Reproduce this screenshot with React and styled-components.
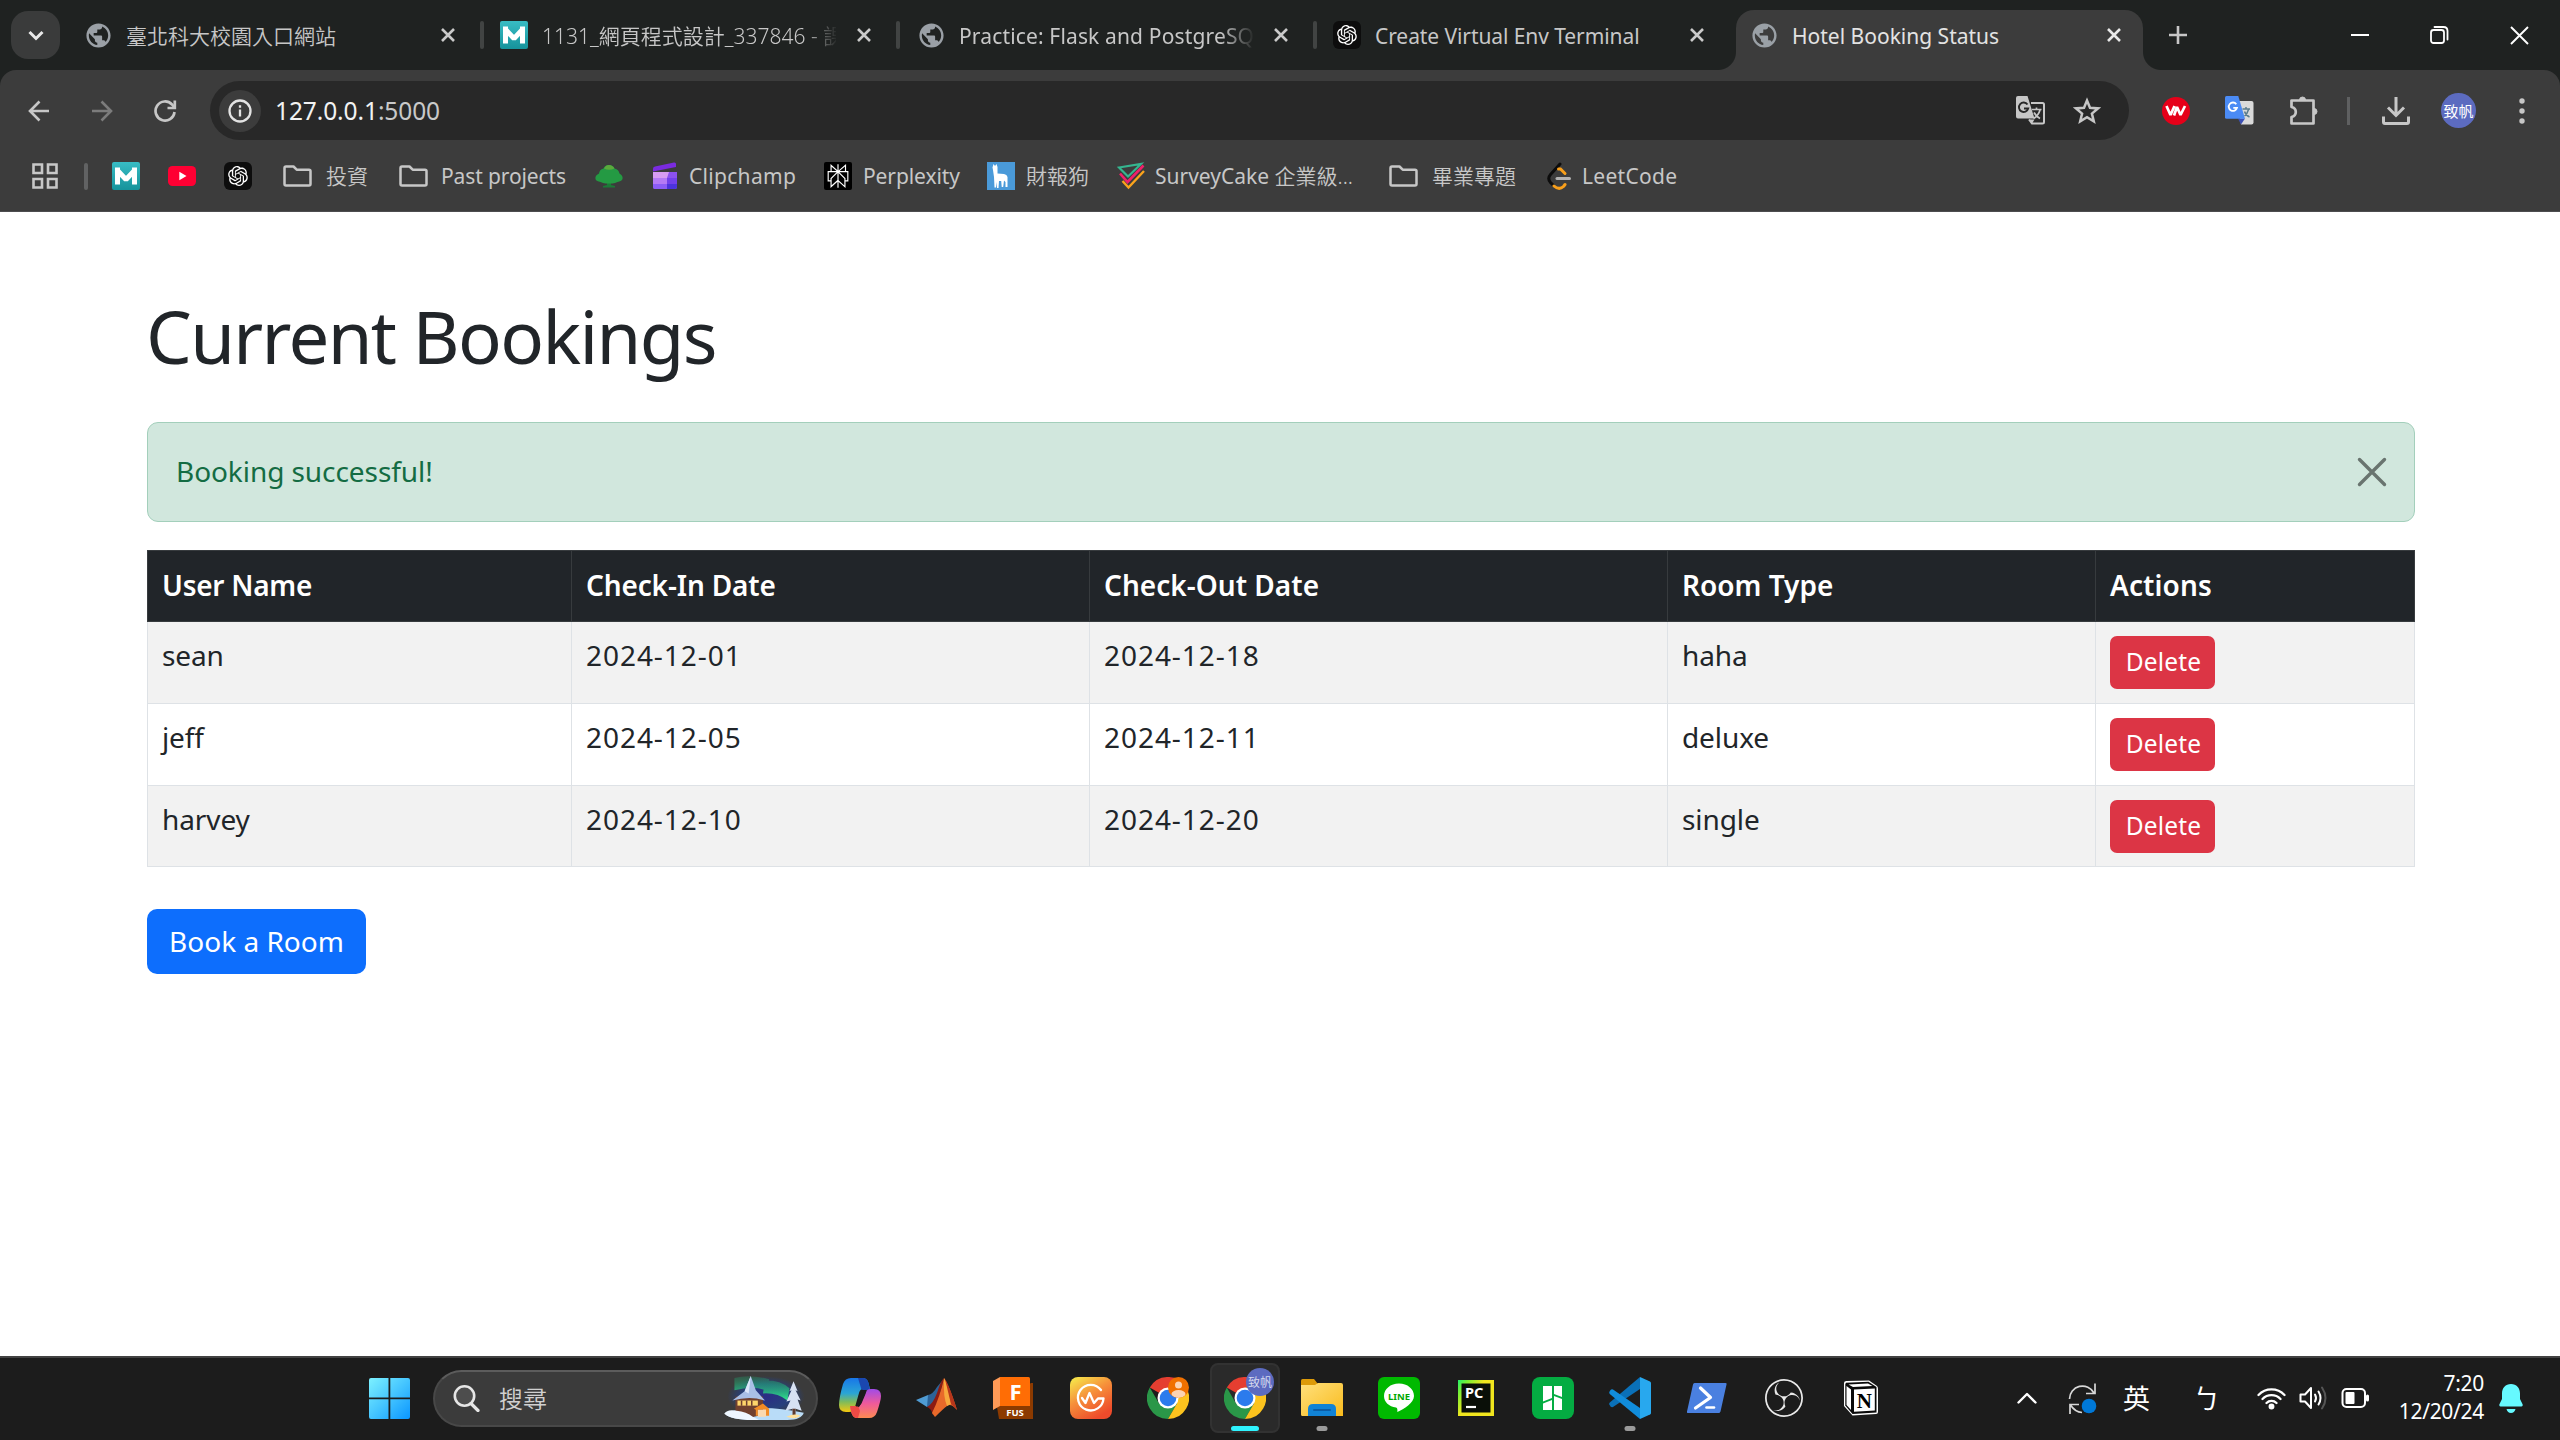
import React from "react";
import styled, { createGlobalStyle, css } from "styled-components";
import { RiOpenaiFill } from "react-icons/ri";
import { SiPerplexity, SiObsstudio } from "react-icons/si";
import { MdPublic } from "react-icons/md";

const GlobalStyle = createGlobalStyle`
  * { box-sizing: border-box; }
  html, body { margin: 0; padding: 0; overflow: hidden; background: #fff; }
  body { font-family: "Noto Sans", "Open Sans", "Noto Sans CJK TC", sans-serif; }
  svg { display: block; flex: none; }
  button { font: inherit; border: 0; padding: 0; }
`;

const uiFont = css`
  font-family: "Noto Sans", "Open Sans", "Noto Sans CJK TC", sans-serif;
`;

const Screen = styled.div`
  width: 2560px;
  height: 1440px;
  display: flex;
  flex-direction: column;
  overflow: hidden;
`;

/* ---------- tab strip ---------- */
const TabStrip = styled.div`
  height: 70px;
  flex: none;
  background: #1f2221;
  display: flex;
  align-items: center;
  padding-left: 11px;
`;
const TabSearch = styled.button`
  width: 49px;
  height: 48px;
  border-radius: 17px;
  background: #3a3b3b;
  display: flex;
  align-items: center;
  justify-content: center;
  margin-right: 8px;
`;
const Tab = styled.div`
  width: ${(p) => p.$width}px;
  height: 70px;
  display: flex;
  align-items: center;
  padding-left: 16px;
`;
const ActiveTab = styled.div`
  position: relative;
  align-self: flex-end;
  width: 407px;
  height: 60px;
  margin-right: 21px;
  padding: 0 0 10px 14px;
  display: flex;
  align-items: center;
  background: #3c3c3c;
  border-radius: 18px 18px 0 0;
  &::before, &::after {
    content: "";
    position: absolute;
    bottom: 0;
    width: 18px;
    height: 18px;
  }
  &::before { left: -18px; background: radial-gradient(circle at 0 0, transparent 17.5px, #3c3c3c 18.5px); }
  &::after { right: -18px; background: radial-gradient(circle at 100% 0, transparent 17.5px, #3c3c3c 18.5px); }
`;
const Favicon = styled.div`
  width: 28px;
  height: 28px;
  flex: none;
  display: flex;
  align-items: center;
  justify-content: center;
`;
const TabTitle = styled.div`
  ${uiFont}
  margin-left: 14px;
  width: 294px;
  flex: none;
  overflow: hidden;
  white-space: nowrap;
  font-size: 21px;
  font-weight: ${(p) => p.$weight || 400};
  line-height: 32px;
  padding-top: 1px;
  color: ${(p) => (p.$active ? "#e3e3e3" : "#c7c7c7")};
  letter-spacing: ${(p) => p.$spacing || 0}px;
  ${(p) => p.$fade && css`mask-image: linear-gradient(90deg, #000 262px, transparent 296px);`}
`;
const TabClose = styled.div`
  width: 14px;
  margin-left: 21px;
  color: ${(p) => (p.$active ? "#e8e8e8" : "#cacaca")};
`;
const TabDivider = styled.div`
  width: 4px;
  height: 28px;
  border-radius: 2px;
  margin-left: 25px;
  background: #414443;
`;
const Spacer = styled.div`flex: 1;`;
const WindowControls = styled.div`
  display: flex;
  align-items: center;
  gap: 61px;
  padding-right: 31px;
  color: #fff;
`;

/* ---------- toolbar ---------- */
const BrowserChrome = styled.div`
  height: 142px;
  flex: none;
  background: #1f2221;
`;
const ChromeBody = styled.div`
  height: 142px;
  background: #3c3c3c;
  border-radius: 16px 16px 0 0;
  border-bottom: 1px solid #4d4d4f;
`;
const Toolbar = styled.div`
  height: 81px;
  padding: 0 30px 0 28px;
  display: flex;
  align-items: center;
  color: #c7c7c7;
`;
const NavIcons = styled.div`
  width: 182px;
  flex: none;
  display: flex;
  gap: 41px;
`;
const Omnibox = styled.div`
  width: 1919px;
  flex: none;
  height: 59px;
  border-radius: 30px;
  background: #282828;
  display: flex;
  align-items: center;
  padding: 0 28px 0 9px;
`;
const SiteInfo = styled.div`
  width: 42px;
  height: 42px;
  border-radius: 50%;
  background: #3c3c3c;
  display: flex;
  align-items: center;
  justify-content: center;
  color: #e3e3e3;
`;
const Url = styled.div`
  margin-left: 14px;
  font-size: 24.5px;
  line-height: 36px;
  color: #c9c9c9;
  letter-spacing: -0.1px;
`;
const UrlHost = styled.span`color: #f2f2f2;`;
const OmniboxIcons = styled.div`
  display: flex;
  align-items: center;
  gap: 28px;
`;
const Extensions = styled.div`
  flex: 1;
  display: flex;
  align-items: center;
  padding-left: 33px;
`;
const VwBadge = styled.div`
  width: 28px;
  height: 28px;
  flex: none;
  border-radius: 50%;
  background: #e60019;
  display: flex;
  align-items: center;
  justify-content: center;
  margin-right: 35px;
`;
const PuzzleSlot = styled.div`
  margin-left: 35px;
`;
const ToolDivider = styled.div`
  width: 3px;
  flex: none;
  height: 28px;
  margin: 0 32px 0 28px;
  background: #5f6061;
`;
const Avatar = styled.div`
  width: 35px;
  height: 35px;
  flex: none;
  border-radius: 50%;
  margin: 0 43px 0 31px;
  background: #5c6bc0;
  color: #fff;
  font: 400 15px/35px "Noto Sans CJK TC", sans-serif;
  text-align: center;
  white-space: nowrap;
`;

/* ---------- bookmarks ---------- */
const BookmarkBar = styled.div`
  height: 60px;
  display: flex;
  align-items: center;
  padding: 0 0 10px 32px;
`;
const AppsDivider = styled.div`
  width: 4px;
  height: 27px;
  border-radius: 2px;
  margin: 0 24px 0 25px;
  background: #616263;
`;
const Bookmark = styled.div`
  width: ${(p) => p.$width}px;
  flex: none;
  display: flex;
  align-items: center;
`;
const BookmarkLabel = styled.div`
  ${uiFont}
  margin-left: ${(p) => p.$gap || 11}px;
  white-space: nowrap;
  font-size: 21px;
  font-weight: ${(p) => p.$weight || 400};
  line-height: 30px;
  color: #c7c7c7;
  letter-spacing: ${(p) => p.$spacing || 0}px;
`;
const ThinHan = styled.span`
  font-weight: 350;
`;
const MoodleTile = styled.div`
  width: 28px;
  height: 28px;
  border-radius: 2px;
  background: linear-gradient(#38bcc4, #16939b);
  display: flex;
  align-items: center;
  justify-content: center;
`;
const DarkTile = styled.div`
  width: 28px;
  height: 28px;
  border-radius: ${(p) => p.$radius}px;
  background: ${(p) => p.$bg || "#0d0d0d"};
  color: #fff;
  display: flex;
  align-items: center;
  justify-content: center;
`;

/* ---------- page ---------- */
const Page = styled.main`
  height: 1144px;
  flex: none;
  background: #fff;
  padding: 82px 145px 0 147px;
  color: #212529;
`;
const Heading = styled.h1`
  margin: 0 0 44px -1px;
  font-size: 72.5px;
  font-weight: 400;
  line-height: 84px;
  letter-spacing: -1.65px;
`;
const Alert = styled.div`
  height: 100px;
  display: flex;
  align-items: center;
  justify-content: space-between;
  padding: 0 27px 0 28px;
  border: 1px solid #a3cfbb;
  border-radius: 11px;
  background: #d1e7dd;
  color: #146c43;
  font-size: 28px;
  line-height: 42px;
  margin-bottom: 28px;
`;
const AlertText = styled.div`
  padding-bottom: 2px;
  letter-spacing: -0.07px;
`;
const BookingTable = styled.table`
  width: 2267px;
  table-layout: fixed;
  border-collapse: collapse;
  font-size: 28px;
  line-height: 42px;
`;
const Col = styled.col`width: ${(p) => p.$width}px;`;
const HeadRow = styled.tr`
  height: 71px;
  background: #212529;
  color: #fff;
`;
const HeadCell = styled.th`
  border: 1px solid #373b3e;
  padding: 0 14px 2px;
  text-align: left;
  font-weight: 600;
  letter-spacing: ${(p) => p.$spacing}px;
`;
const BodyRow = styled.tr`
  height: 82px;
  &:nth-child(odd) { background: #f2f2f2; }
  &:last-child { height: 81px; }
`;
const Cell = styled.td`
  border: 1px solid #dee2e6;
  padding: 12px 14px 0;
  vertical-align: top;
  letter-spacing: ${(p) => (p.$date ? 0.95 : -0.1)}px;
`;
const DeleteButton = styled.button`
  display: block;
  width: 105px;
  height: 53px;
  margin-top: 2px;
  border-radius: 7px;
  background: #dc3545;
  color: #fff;
  font-size: 24.5px;
  line-height: 50px;
  letter-spacing: 0.2px;
  padding: 0 0 2px 2px;
`;
const BookButton = styled.button`
  display: block;
  width: 219px;
  height: 65px;
  margin-top: 42px;
  border-radius: 10px;
  background: #0d6efd;
  color: #fff;
  font-size: 28px;
  line-height: 62px;
  padding-bottom: 2px;
`;

/* ---------- taskbar ---------- */
const Taskbar = styled.footer`
  height: 84px;
  flex: none;
  background: #1c1c1c;
  border-top: 2px solid #424242;
  display: flex;
  align-items: center;
  padding: 0 37px 2px 369px;
`;
const SearchPill = styled.div`
  width: 385px;
  height: 57px;
  margin: 0 7px 0 23px;
  border-radius: 29px;
  border: 2px solid #484848;
  border-top-color: #5c5c5c;
  background: #3b3b3b;
  display: flex;
  align-items: center;
  padding: 0 10px 0 18px;
  color: #d0d0d0;
`;
const SearchText = styled.div`
  margin-left: 19px;
  flex: 1;
  font: 350 24px/36px "Noto Sans CJK TC", sans-serif;
  padding-bottom: 1px;
`;
const AppSlot = styled.div`
  position: relative;
  width: 70px;
  height: 70px;
  margin-right: 7px;
  border-radius: 8px;
  display: flex;
  align-items: center;
  justify-content: center;
  ${(p) => p.$active && css`background: #2a2a2a; border: 2px solid #323232;`}
`;
const RunMark = styled.div`
  position: absolute;
  bottom: ${(p) => (p.$active ? 0 : 2)}px;
  left: 50%;
  transform: translateX(-50%);
  width: ${(p) => (p.$active ? 28 : 11)}px;
  height: 5px;
  border-radius: 3px;
  background: ${(p) => (p.$active ? "#2ff3ff" : "#9a9a9a")};
`;
const ProfileBadge = styled.div`
  position: absolute;
  top: 3px;
  right: 4px;
  width: 28px;
  height: 28px;
  border-radius: 50%;
  background: #5c6bc0;
  color: #d5d9ee;
  font: 400 12px/28px "Noto Sans CJK TC", sans-serif;
  text-align: center;
`;
const GuestBadge = styled.div`
  position: absolute;
  top: 14px;
  right: 14px;
`;
const Tray = styled.div`
  display: flex;
  align-items: center;
  color: #fff;
`;
const TrayGlyph = styled.div`
  width: ${(p) => p.$width}px;
  font: 400 27px/40px "Noto Sans CJK TC", sans-serif;
`;
const TrayItem = styled.div`width: ${(p) => p.$width}px;`;
const Clock = styled.div`
  width: 129px;
  text-align: right;
  font-size: 21px;
  line-height: 28px;
  letter-spacing: -0.3px;
  padding: 0 15px 2px 0;
`;

/* ---------- icons ---------- */
const stroke = { fill: "none", stroke: "currentColor", strokeLinecap: "round", strokeLinejoin: "round" };

const Cross = ({ size = 14, w = 2.6, cap = "butt" }) => (
  <svg width={size} height={size} viewBox={`0 0 ${size} ${size}`} {...stroke} strokeLinecap={cap} strokeWidth={w}>
    <path d={`M1 1 ${size - 1} ${size - 1}M${size - 1} 1 1 ${size - 1}`} />
  </svg>
);
const Moodle = () => (
  <MoodleTile>
    <svg width="28" height="28" viewBox="0 0 28 28" fill="none" stroke="#fff" strokeWidth="5">
      <path d="M5.500 22.500V8.500L14 17.500 22.500 8.500V22.500" strokeLinejoin="bevel" />
      <path d="M5.500 5.500V12M22.500 5.500V12" />
    </svg>
  </MoodleTile>
);
const OpenAiTile = () => <DarkTile $radius={6}><RiOpenaiFill size={24} /></DarkTile>;
const FolderLine = () => (
  <svg width="29" height="22" viewBox="0 0 29 22" {...stroke} stroke="#c7c7c7" strokeWidth="2.500">
    <path d="M1.500 19V3q0-1.500 1.500-1.500h7.500l3.200 3.200H26q1.500 0 1.500 1.500V19q0 1.500-1.500 1.500H3Q1.500 20.500 1.500 19Z" />
  </svg>
);
const YouTube = () => (
  <svg width="28" height="28" viewBox="0 0 28 28"><rect y="4" width="28" height="20" rx="4.500" fill="#ff0033" /><path d="M11.300 9.800v8.400L18.500 14Z" fill="#fff" /></svg>
);
const Tree = () => (
  <svg width="28" height="28" viewBox="0 0 28 28">
    <path d="M12 17h4v6l4 1v1.500H8V24l4-1Z" fill="#1c7a37" />
    <path d="M14 3c3 0 4.500 1.500 5.500 3.500 3 .500 4.500 2.500 5 5 2.500 1.500 3.500 3.500 3 5.500-.800 2-2.500 2.500-5 3-2 .500-3 1.500-5 1.500h-7c-2 0-3-1-5-1.500C3 19.500 1 19 .500 17 0 15 1 13 4 11.500c.500-2.500 1.500-4.500 4.500-5C9.500 4.500 11 3 14 3Z" fill="#249a43" />
    <path d="M9 6.500C10 4 12 3 14 3s4.500 1.500 5.500 3.500Q14 9 9 6.500Z" fill="#5ba93c" />
  </svg>
);
const Clipchamp = () => (
  <svg width="26" height="28" viewBox="0 0 26 28">
    <path d="M1 9.500V6.500Q1 5 3 4.500L22 .500q2-.300 2 1.500v3Z" fill="#7a2be0" />
    <path d="M1 10h24v15q0 2-2 2H3q-2 0-2-2Z" fill="#8b51ee" />
    <path d="M1 10h16l-2 6H1Z" fill="#d79cf2" /><path d="M1 16h14v6H1Z" fill="#b57af5" /><path d="M15 16h10v6H15Z" fill="#7240ea" /><path d="M1 22h14v5H3q-2 0-2-2Z" fill="#8c5cf6" /><path d="M15 22h10v3q0 2-2 2h-8Z" fill="#4c33dd" />
  </svg>
);
const Alpaca = () => (
  <svg width="28" height="28" viewBox="0 0 28 28"><rect width="28" height="28" fill="#4a9ad9" /><path d="M6.500 2l1.500 2L9.500 2l1 3v6.500l6.500.500q3 .500 3.500 3V25h-2v-5l-1.500-1.500-.800 6.500h-1.500l-.500-6h-2.200l-.500 7H10l-.500-6-.500 5.500H7.500L7 15 6 8 5.500 5.500Z" fill="#fff" /></svg>
);
const SurveyCake = () => (
  <svg width="28" height="28" viewBox="0 0 28 28" fill="none" strokeWidth="2">
    <path d="M2 5.500 24 2 11 14.500Z" stroke="#35b58f" strokeWidth="2.200" />
    <path d="M3 11.500 10.500 20 26.500 3.500" stroke="#f0206a" strokeWidth="2.600" />
    <path d="M5.500 19 11.500 25.500 27 9" stroke="#fba31c" strokeWidth="2.400" />
  </svg>
);
const LeetCode = () => (
  <svg width="28" height="28" viewBox="0 0 28 28" fill="none" strokeWidth="3" strokeLinecap="round">
    <path d="M13 2 3.500 12.500Q0 16.500 3.500 20.500L6 23" stroke="#0c0c0c" />
    <path d="M11.500 7l2 0L18 11.500" stroke="#f89f1b" /><path d="M7 24q5 4.500 9.500.500L18 22.500" stroke="#f89f1b" /><path d="M10 16.500H22.500" stroke="#b3b3b3" />
  </svg>
);
const TranslateMono = () => (
  <svg width="29" height="29" viewBox="0 0 29 29">
    <path d="M15 7h11.500q1.500 0 1.500 1.500V26q0 1.500-1.500 1.500H16l-3-4" fill="none" stroke="#c7c7c7" strokeWidth="2" />
    <path d="M2 0h9.500L18.500 22.500H2q-2 0-2-2V2Q0 0 2 0ZM13.500 23.500h5l-2.500 4Z" fill="#c7c7c7" />
    <path d="M16 13.500h9.500M20.500 11.500v2M24 14q-1.500 5.500-6.500 8.500M18 16.500q2 4 6 6" fill="none" stroke="#c7c7c7" strokeWidth="1.700" />
    <path d="M11.500 8.500A4.700 4.700 0 1 0 12.200 12.500H8" fill="none" stroke="#282828" strokeWidth="1.900" />
  </svg>
);
const TranslateColor = () => (
  <svg width="29" height="29" viewBox="0 0 29 29">
    <path d="M12 5h14.500Q28.500 5 28.500 7v19.500q0 2-2 2H16Z" fill="#dadada" />
    <path d="M13 22.500h7l-4 6Z" fill="#3c50b5" />
    <path d="M1.500 0h11.800L20 22.700H1.500Q0 22.700 0 21.200V1.500Q0 0 1.500 0Z" fill="#4b8bf5" />
    <path d="M17.500 13h7.500M21 11v2M23.500 13.500q-1 4-4 6.500M19.500 15.500q1.500 4 5 5.500" fill="none" stroke="#5b7c8c" strokeWidth="1.500" />
    <path d="M11.300 8.200A4.200 4.200 0 1 0 12 11.800H8.300" fill="none" stroke="#fff" strokeWidth="1.800" />
  </svg>
);
const Puzzle = () => (
  <svg width="30" height="30" viewBox="0 0 30 30" fill="none" stroke="#c7c7c7" strokeWidth="2.700" strokeLinejoin="round">
    <path d="M2.500 4.500H24.500V27.500H2.500V21Q6.800 20 6.800 16T2.500 11Z" /><path d="M10.500 4a3 3 0 0 1 6 0ZM25 12.500a3 3 0 0 1 0 6Z" fill="#c7c7c7" strokeWidth="1" />
  </svg>
);
const ChromeLogo = () => (
  <svg width="42" height="42" viewBox="0 0 42 42">
    <path d="M21 21 2.800 10.500A21 21 0 0 1 39.200 10.500H21Z" fill="#e53e30" />
    <path d="M2.800 10.500A21 21 0 0 0 21 42L30.100 26.200 21 21 11.900 26.200Z" fill="#2a9748" />
    <path d="M39.200 10.500A21 21 0 0 1 21 42L30.100 26.200 21 11.500V10.500Z" fill="#fcc31e" />
    <circle cx="21" cy="21" r="10.500" fill="#fff" /><circle cx="21" cy="21" r="8.300" fill="#2b7bed" />
  </svg>
);
const GuestFace = () => (
  <svg width="21" height="21" viewBox="0 0 21 21">
    <defs><clipPath id="guest"><circle cx="10.500" cy="10.500" r="10.500" /></clipPath></defs>
    <g clipPath="url(#guest)"><rect width="21" height="21" fill="#f07000" /><circle cx="10.500" cy="8" r="3.500" fill="#fbd3b2" /><ellipse cx="10.500" cy="17" rx="7" ry="4" fill="#fbd3b2" /></g>
  </svg>
);
const WindowsLogo = () => (
  <svg width="41" height="41" viewBox="0 0 41 41">
    <defs><linearGradient id="win" gradientUnits="userSpaceOnUse" x1="0" y1="0" x2="41" y2="41"><stop stopColor="#7df1ff" /><stop offset=".5" stopColor="#45c5ff" /><stop offset="1" stopColor="#0a96ff" /></linearGradient></defs>
    <path d="M2 0H19.500V19.500H0V2Q0 0 2 0ZM21.300 0H39q2 0 2 2V19.500H21.300ZM0 21.300H19.500V41H2q-2 0-2-2ZM21.300 21.300H41V39q0 2-2 2H21.300Z" fill="url(#win)" />
  </svg>
);
const Magnifier = () => (
  <svg width="27" height="27" viewBox="0 0 27 27" {...stroke} stroke="#e6e6e6" strokeWidth="2.600"><circle cx="11.500" cy="11" r="9.700" fill="#4d4d4d" /><path d="M18 18.500 25 25.500" strokeWidth="3.200" /></svg>
);
const WinterScene = () => (
  <svg width="82" height="53" viewBox="0 0 80 52">
    <defs><linearGradient id="aur" x1="0" y1="0" x2="0" y2="1"><stop stopColor="#1f9d6c" stopOpacity=".3" /><stop offset="1" stopColor="#2fe68d" /></linearGradient><radialGradient id="nt"><stop stopColor="#2b2c86" /><stop offset=".6" stopColor="#27407c" /><stop offset="1" stopColor="#3b3b3b" /></radialGradient></defs>
    <ellipse cx="41" cy="24" rx="38" ry="20" fill="url(#nt)" />
    <path d="M10 6Q24 2 44 7V20Q32 12 10 18ZM40 8Q56 8 64 16L62 28Q52 20 38 21Z" fill="url(#aur)" />
    <path d="M8 38Q40 32 78 40 76 47 62 47H24Q6 46 2 42Z" fill="#b9dcf8" />
    <path d="M11 24h27v18L25 45 11 41Z" fill="#70402f" /><path d="M13 28h20v5H13Z" fill="#ffd56b" /><path d="M17 28v5M22 28v5M27 28v5" stroke="#70402f" strokeWidth="1.500" />
    <path d="M26 4 31 18 40 28Q25 23 8 28L20 19Z" fill="#a9bfe6" /><path d="M26 4 24 21 20 19Z" fill="#dce7fa" />
    <path d="M29 36 38 31 44 36V43H41V37H33V43H31V37Z" fill="#f28b25" /><path d="M33 37h8v7h-8Z" fill="#fbd9b0" />
    <path d="M0 41Q3 36 12 38 22 39 28 44L34 47Q8 48 0 41Z" fill="#eef6ff" />
    <path d="M68 9 72 19 70 18 75 28 72 27 76 38 70 36V44H67V36L60 38 65 28 61 29 66 18 64 19Z" fill="#d7e1f2" /><path d="M67 36h3v9h-3Z" fill="#5d3b2f" /><path d="M61 44q8-4 14-1-5 4-14 1Z" fill="#ffe09a" />
  </svg>
);
const Copilot = () => (
  <svg width="42" height="40" viewBox="0 0 42 40">
    <defs><linearGradient id="cpa" x1="0" y1="0" x2="0" y2="1"><stop stopColor="#1876e8" /><stop offset=".45" stopColor="#2aa5d5" /><stop offset=".7" stopColor="#7dbb5c" /><stop offset="1" stopColor="#f5c80e" /></linearGradient><linearGradient id="cpb" x1="0" y1="0" x2="0" y2="1"><stop stopColor="#a04be8" /><stop offset=".5" stopColor="#ef5a9a" /><stop offset="1" stopColor="#fc8a52" /></linearGradient></defs>
    <path d="M12 0H24Q28 0 29.500 5L31 11H24Q21 11 20 15L16 29Q15 34 10 34H7Q0 34 0 27 0 20 4 6 6 0 12 0Z" fill="url(#cpa)" />
    <path d="M19 0h5Q28 0 29.500 5L31 12H25Q22 12 22 10Z" fill="#1a47b0" />
    <path d="M30 40H18Q14 40 12.500 35L11 30H18Q21 29 22 25L26 16Q27 11 32 11H35Q42 11 42 18 42 22 38 34 36 40 30 40Z" fill="url(#cpb)" />
    <path d="M11 28h8l2 5-2 7h-1Q14 40 12.500 35Z" fill="#ee4a45" />
    <path d="M22 13h5.500l-1 3-4 9.500-2.500 3h-3l2.500-9Q20.500 13.500 22 13Z" fill="#1c1c1c" />
  </svg>
);
const Matlab = () => (
  <svg width="42" height="42" viewBox="0 0 42 42">
    <path d="M0 23 12 18 18 24 11 30Z" fill="#4f9bd3" /><path d="M12 18Q17 17 21 10L26 4 19 30 11 30Z" fill="#2c6297" />
    <path d="M11 30Q17 27 21 16 25 3 28 1 24 20 17 38 15 31 11 30Z" fill="#8c1b12" />
    <path d="M28 1Q33 8 41 33 35 26 31 29 27 32 19 40L16 36Q24 20 28 1Z" fill="#e8692a" /><path d="M28 1Q32 8 35 27L31 29Q27 20 28 1Z" fill="#f7a83c" /><path d="M29 2Q34 10 41 33L35 27Z" fill="#b7361b" />
  </svg>
);
const Fusion = () => (
  <svg width="42" height="42" viewBox="0 0 42 42">
    <path d="M38 6h2V42H6L4 30Z" fill="#8c3a00" /><path d="M0 4 7 0V29L0 33Z" fill="#ff9a57" /><path d="M7 0H35.500q1.500 0 1.500 1.500V29H7Z" fill="#ff6d05" />
    <text x="22.500" y="22.500" textAnchor="middle" fontFamily="Noto Sans" fontWeight="700" fontSize="22" fill="#fff">F</text>
    <text x="22" y="38.500" textAnchor="middle" fontFamily="Noto Sans" fontWeight="700" fontSize="9.500" fill="#fff">FUS</text>
  </svg>
);
const Gravit = () => (
  <svg width="42" height="42" viewBox="0 0 42 42">
    <defs><linearGradient id="gm" x1="0" y1="0" x2=".6" y2="1"><stop stopColor="#f6f04c" /><stop offset=".5" stopColor="#f6903a" /><stop offset="1" stopColor="#ee4b2b" /></linearGradient></defs>
    <rect width="42" height="42" rx="8" fill="url(#gm)" />
    <path d="M31 13A12.800 12.800 0 1 0 33.500 21.500H28L24 26 19.500 16 15.500 26 12 21" fill="none" stroke="#fff" strokeWidth="2.300" strokeLinejoin="round" strokeLinecap="round" />
  </svg>
);
const Explorer = () => (
  <svg width="42" height="38" viewBox="0 0 42 38">
    <defs><linearGradient id="fl" x1="0" y1="0" x2="1" y2="1"><stop stopColor="#ffe07c" /><stop offset="1" stopColor="#f9bb1d" /></linearGradient></defs>
    <path d="M0 1.500Q0 0 1.500 0H13l4 5V12H0Z" fill="#dc9a09" /><path d="M0 6H14l3-2H40q2 0 2 2V37H1.500Q0 37 0 35.500Z" fill="url(#fl)" />
    <path d="M7 30Q7 25 12 25H30q5 0 5 5V37H7Z" fill="#1183d6" /><path d="M13 31H29" stroke="#0b5da6" strokeWidth="2" strokeLinecap="round" />
  </svg>
);
const Line = () => (
  <svg width="42" height="42" viewBox="0 0 42 42"><rect width="42" height="42" rx="6" fill="#00b900" /><path d="M21 6.500C12.500 6.500 6 12 6 19c0 6 5 10.500 12 11.500 1.500.500 1.500 2 1.300 4.500C26 32 36 26 36 19 36 12 29.500 6.500 21 6.500Z" fill="#fff" /><text x="21" y="22.500" textAnchor="middle" fontFamily="Noto Sans" fontWeight="700" fontSize="9.500" fill="#00a800">LINE</text></svg>
);
const PyCharm = () => (
  <svg width="36" height="36" viewBox="0 0 36 36">
    <defs><linearGradient id="pc" x1="0" y1="0" x2=".5" y2=".35"><stop stopColor="#21f06a" /><stop offset=".4" stopColor="#7df032" /><stop offset="1" stopColor="#f0e51e" /></linearGradient></defs>
    <rect width="36" height="36" fill="url(#pc)" /><rect x="3.500" y="3.500" width="29" height="29" fill="#0a0f08" />
    <text x="7" y="18" fontFamily="Noto Sans" fontWeight="700" fontSize="14.500" fill="#fff">PC</text><path d="M8 27H18" stroke="#fff" strokeWidth="2.200" />
  </svg>
);
const GreenDoor = () => (
  <svg width="42" height="42" viewBox="0 0 42 42"><rect width="42" height="42" rx="8" fill="#04ac42" /><path d="M11 9h9V21L11 24.500ZM22 9H30V20L22 17ZM11 26.500 20 23V33H11ZM22 19 30 22V33H22Z" fill="#fff" /></svg>
);
const VsCode = () => (
  <svg width="42" height="42" viewBox="0 0 42 42">
    <path d="M31 0V12L4 30Q2.500 30.500 1.500 29.500L.300 27.500Q-.200 26.500.800 25.500Z" fill="#0a70b8" />
    <path d="M.800 17 31 42V31L4 12.500Q2.500 12 1.500 13L.300 15Q0 16 .800 17Z" fill="#118cdb" /><path d="M31 0 41 4.500Q42 5 42 6V36Q42 37 41 37.500L31 42Z" fill="#28a8ee" />
  </svg>
);
const PowerShell = () => (
  <svg width="40" height="30" viewBox="0 0 40 30"><path d="M7.500 0H38.500q1.500 0 1 1.500L33.500 28.500Q33 30 31.500 30H1Q-.300 30 0 28.500L6 1.500Q6.300 0 7.500 0Z" fill="#4a80e0" /><path d="M13.500 5 23.500 14.500 8.500 25" {...stroke} stroke="#fff" strokeWidth="3.200" /><path d="M19.500 24.500h7.500" {...stroke} stroke="#fff" strokeWidth="2.600" /></svg>
);
const Notion = () => (
  <svg width="36" height="36" viewBox="0 0 36 36">
    <path d="M1 3Q1 1 3.500 1L26 .500 34 6Q35 7 35 9V32Q35 34 33 34L9.500 35.500 1 26Z" fill="#fff" />
    <path d="M3 2.800 25.500 1.800 33.500 7V32.500L9.500 34 2.300 25.500V4Z" fill="#0a0a0a" />
    <path d="M5.500 4.500 25 3.500 29.500 6 10 7Z" fill="#fff" /><path d="M3.500 6 8 9.500V30L3.500 25Z" fill="#fff" /><path d="M11 9.500 31.800 8.500V30.500L11 31.800Z" fill="#fff" />
    <text x="21.300" y="27.500" textAnchor="middle" fontFamily="Liberation Serif" fontWeight="700" fontSize="21" fill="#000">N</text>
  </svg>
);

const quietTabs = [
  { icon: <MdPublic size={29} color="#9aa0a6" />, title: "臺北科大校園入口網站", weight: 350, width: 416 },
  { icon: <Moodle />, title: "1131_網頁程式設計_337846 - 課", weight: 350, fade: true, width: 417 },
  { icon: <MdPublic size={29} color="#9aa0a6" />, title: "Practice: Flask and PostgreSQL", spacing: 0.15, fade: true, width: 416 },
  { icon: <OpenAiTile />, title: "Create Virtual Env Terminal", spacing: -0.08, last: true, width: 419 },
];

const bookmarks = [
  { icon: <Moodle />, width: 56 },
  { icon: <YouTube />, width: 56 },
  { icon: <OpenAiTile />, width: 59 },
  { icon: <FolderLine />, label: "投資", weight: 350, gap: 14, width: 116 },
  { icon: <FolderLine />, label: "Past projects", spacing: -0.12, gap: 13, width: 196 },
  { icon: <Tree />, width: 57 },
  { icon: <Clipchamp />, label: "Clipchamp", spacing: 0.3, gap: 11, width: 172 },
  { icon: <DarkTile $radius={2} $bg="#000"><SiPerplexity size={24} /></DarkTile>, label: "Perplexity", spacing: -0.1, gap: 11, width: 163 },
  { icon: <Alpaca />, label: "財報狗", weight: 350, gap: 11, width: 130 },
  { icon: <SurveyCake />, label: <>SurveyCake <ThinHan>企業級...</ThinHan></>, gap: 10, width: 272 },
  { icon: <FolderLine />, label: "畢業專題", weight: 350, gap: 14, width: 158 },
  { icon: <LeetCode />, label: "LeetCode", spacing: 0.3, gap: 7, width: 160 },
];

const columns = [
  { title: "User Name", width: 424, spacing: -0.25 },
  { title: "Check-In Date", width: 518, spacing: -0.15 },
  { title: "Check-Out Date", width: 578, spacing: 0.02 },
  { title: "Room Type", width: 428, spacing: 0 },
  { title: "Actions", width: 319, spacing: 0.1 },
];

const bookings = [
  ["sean", "2024-12-01", "2024-12-18", "haha"],
  ["jeff", "2024-12-05", "2024-12-11", "deluxe"],
  ["harvey", "2024-12-10", "2024-12-20", "single"],
];

export default function App() {
  return (
    <Screen>
      <GlobalStyle />
      <TabStrip>
        <TabSearch>
          <svg width="16" height="11" viewBox="0 0 16 11" fill="none" stroke="#e8e8e8" strokeWidth="3"><path d="M1.500 2 8 8.500 14.500 2" /></svg>
        </TabSearch>
        {quietTabs.map((t) => (
          <Tab key={t.title} $width={t.width}>
            <Favicon>{t.icon}</Favicon>
            <TabTitle $weight={t.weight} $fade={t.fade} $spacing={t.spacing}>{t.title}</TabTitle>
            <TabClose><Cross /></TabClose>
            {!t.last && <TabDivider />}
          </Tab>
        ))}
        <ActiveTab>
          <Favicon><MdPublic size={29} color="#9aa0a6" /></Favicon>
          <TabTitle $active>Hotel Booking Status</TabTitle>
          <TabClose $active><Cross /></TabClose>
        </ActiveTab>
        <svg width="38" height="18" viewBox="0 0 38 18" stroke="#c7c7c7" strokeWidth="2.600"><path d="M5 9H23M14 0V18" /></svg>
        <Spacer />
        <WindowControls>
          <svg width="18" height="18" viewBox="0 0 18 18" stroke="#fff" strokeWidth="2"><path d="M0 9H18" /></svg>
          <svg width="19" height="18" viewBox="0 0 19 18" {...stroke} strokeWidth="1.800"><rect x="1" y="4" width="13" height="13" rx="2.500" /><path d="M4.500 1H13.500Q17.500 1 17.500 5V13.500" /></svg>
          <Cross size={19} w={1.9} />
        </WindowControls>
      </TabStrip>

      <BrowserChrome>
        <ChromeBody>
          <Toolbar>
            <NavIcons>
              <svg width="22" height="22" viewBox="0 0 22 22" fill="none" stroke="#c7c7c7" strokeWidth="2.600"><path d="M21 11H2M11.500 1.500 2 11 11.500 20.500" /></svg>
              <svg width="22" height="22" viewBox="0 0 22 22" fill="none" stroke="#7c7c7c" strokeWidth="2.600"><path d="M1 11H20M10.500 1.500 20 11 10.500 20.500" /></svg>
              <svg width="23" height="22" viewBox="0 0 23 22" fill="none" stroke="#c7c7c7" strokeWidth="2.700"><path d="M20.500 12A9.500 9.500 0 1 1 18 4.500L20 7" /><path d="M20.800 .500V8H13.500" /></svg>
            </NavIcons>
            <Omnibox>
              <SiteInfo>
                <svg width="24" height="24" viewBox="0 0 24 24" fill="none" stroke="currentColor" strokeWidth="2.300"><circle cx="12" cy="12" r="10.500" /><path d="M12 10.500V17.500M12 6.300V8.700" /></svg>
              </SiteInfo>
              <Url><UrlHost>127.0.0.1</UrlHost>:5000</Url>
              <Spacer />
              <OmniboxIcons>
                <TranslateMono />
                <svg width="28" height="28" viewBox="0 0 28 28" fill="none" stroke="#c7c7c7" strokeWidth="2.500"><path d="M14 3.500 17 10.800 25 11.400 18.900 16.600 20.800 24.300 14 20.200 7.200 24.300 9.100 16.600 3 11.400 11 10.800Z" /></svg>
              </OmniboxIcons>
            </Omnibox>
            <Extensions>
              <VwBadge>
                <svg width="22" height="12" viewBox="0 0 22 12" fill="none" stroke="#fff" strokeWidth="2.700" strokeLinejoin="bevel"><path d="M1.500 1 5.500 10 9.500 1M9 10.500 12 2 15.500 10 20 1" /></svg>
              </VwBadge>
              <TranslateColor />
              <PuzzleSlot><Puzzle /></PuzzleSlot>
              <ToolDivider />
              <svg width="28" height="28" viewBox="0 0 28 28" fill="none" stroke="#c7c7c7" strokeWidth="3"><path d="M14 0V18M6 10.500 14 18.500 22 10.500M1.500 19.500V25Q1.500 26.500 3 26.500H25Q26.500 26.500 26.500 25V19.500" /></svg>
              <Avatar>致帆</Avatar>
              <svg width="6" height="26" viewBox="0 0 6 26" fill="#c7c7c7"><circle cx="3" cy="3" r="2.700" /><circle cx="3" cy="13" r="2.700" /><circle cx="3" cy="23" r="2.700" /></svg>
            </Extensions>
          </Toolbar>
          <BookmarkBar>
            <svg width="27" height="26" viewBox="0 0 27 26" fill="none" stroke="#c7c7c7" strokeWidth="2.600"><path d="M1.500 1.500h8.500v8.500h-8.500ZM16 1.500h8.500v8.500h-8.500ZM1.500 16h8.500v8.500h-8.500ZM16 16h8.500v8.500h-8.500Z" /></svg>
            <AppsDivider />
            {bookmarks.map((b, i) => (
              <Bookmark key={i} $width={b.width}>
                {b.icon}
                {b.label && <BookmarkLabel $gap={b.gap} $weight={b.weight} $spacing={b.spacing}>{b.label}</BookmarkLabel>}
              </Bookmark>
            ))}
          </BookmarkBar>
        </ChromeBody>
      </BrowserChrome>

      <Page>
        <Heading>Current Bookings</Heading>
        <Alert>
          <AlertText>Booking successful!</AlertText>
          <svg width="30" height="30" viewBox="0 0 30 30" stroke="#69746f" strokeWidth="3.400" strokeLinecap="round"><path d="M2.500 2.500 27.500 27.500M27.500 2.500 2.500 27.500" /></svg>
        </Alert>
        <BookingTable>
          <colgroup>{columns.map((c) => <Col key={c.title} $width={c.width} />)}</colgroup>
          <thead>
            <HeadRow>{columns.map((c) => <HeadCell key={c.title} $spacing={c.spacing}>{c.title}</HeadCell>)}</HeadRow>
          </thead>
          <tbody>
            {bookings.map(([name, from, to, room]) => (
              <BodyRow key={name}>
                <Cell>{name}</Cell><Cell $date>{from}</Cell><Cell $date>{to}</Cell><Cell>{room}</Cell>
                <Cell><DeleteButton>Delete</DeleteButton></Cell>
              </BodyRow>
            ))}
          </tbody>
        </BookingTable>
        <BookButton>Book a Room</BookButton>
      </Page>

      <Taskbar>
        <WindowsLogo />
        <SearchPill><Magnifier /><SearchText>搜尋</SearchText><WinterScene /></SearchPill>
        <AppSlot><Copilot /></AppSlot>
        <AppSlot><Matlab /></AppSlot>
        <AppSlot><Fusion /></AppSlot>
        <AppSlot><Gravit /></AppSlot>
        <AppSlot><ChromeLogo /><GuestBadge><GuestFace /></GuestBadge></AppSlot>
        <AppSlot $active><ChromeLogo /><ProfileBadge>致帆</ProfileBadge><RunMark $active /></AppSlot>
        <AppSlot><Explorer /><RunMark /></AppSlot>
        <AppSlot><Line /></AppSlot>
        <AppSlot><PyCharm /></AppSlot>
        <AppSlot><GreenDoor /></AppSlot>
        <AppSlot><VsCode /><RunMark /></AppSlot>
        <AppSlot><PowerShell /></AppSlot>
        <AppSlot><SiObsstudio size={38} color="#e8e8e8" /></AppSlot>
        <AppSlot><Notion /></AppSlot>
        <Spacer />
        <Tray>
          <TrayItem $width={51}><svg width="20" height="12" viewBox="0 0 20 12" {...stroke} strokeWidth="2.400"><path d="M1.500 10.500 10 2 18.500 10.500" /></svg></TrayItem>
          <TrayItem $width={55}>
            <svg width="30" height="31" viewBox="0 0 30 31" fill="none" stroke="#d8d8d8" strokeWidth="1.700"><path d="M1.500 16A13 13 0 0 1 26 10M27 .500V10.500H18M2 31V21.500H11M2.500 22Q7 29 14 29.500" /><circle cx="21" cy="23" r="7.300" fill="#0078d7" stroke="none" /></svg>
          </TrayItem>
          <TrayGlyph $width={70}>英</TrayGlyph>
          <TrayGlyph $width={64}>ㄅ</TrayGlyph>
          <TrayItem $width={42}>
            <svg width="29" height="24" viewBox="0 0 29 24" {...stroke} strokeWidth="2.300"><path d="M1.500 9A18 18 0 0 1 27.500 9M5.500 13A12.500 12.500 0 0 1 23.500 13M9.500 17A7 7 0 0 1 19.500 17" /><circle cx="14.500" cy="20.500" r="1.800" fill="currentColor" /></svg>
          </TrayItem>
          <TrayItem $width={42}>
            <svg width="29" height="26" viewBox="0 0 29 26" {...stroke} strokeWidth="2"><path d="M1.500 9.500H6L12 3V23L6 16.500H1.500ZM16 9.500Q18 13 16 16.500M19.500 6.500Q23.500 13 19.500 19.500" /><path d="M23 2.500Q30 13 23 23.500" stroke="#555" /></svg>
          </TrayItem>
          <svg width="29" height="20" viewBox="0 0 29 20" {...stroke} strokeWidth="2"><rect x="1.500" y="1" width="22.500" height="18" rx="4" /><rect x="4.500" y="4" width="9" height="12" rx="1" fill="#fff" stroke="none" /><path d="M26.500 8V12" strokeWidth="3" /></svg>
          <Clock>7:20<br />12/20/24</Clock>
          <svg width="24" height="29" viewBox="0 0 24 29" fill="#66f9ff"><path d="M12 0C6.500 0 3 4 3 9.500V15L.300 20.500Q0 22.500 1.500 22.500H22.500Q24 22.500 23.700 20.500L21 15V9.500C21 4 17.500 0 12 0ZM7.500 25H16.500Q15.500 29 12 29 8.500 29 7.500 25Z" /></svg>
        </Tray>
      </Taskbar>
    </Screen>
  );
}
